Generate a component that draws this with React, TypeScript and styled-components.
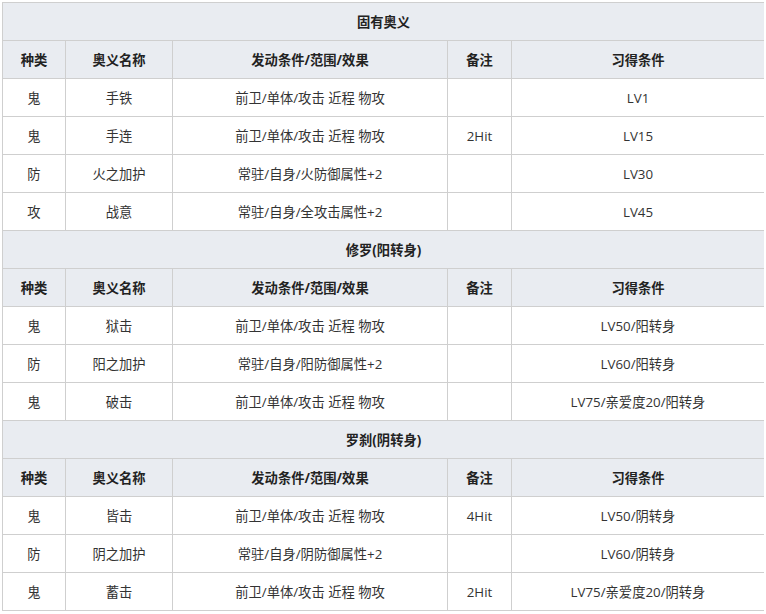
import React from "react";
import styled, { createGlobalStyle } from "styled-components";

type Row = [string, string, string, string, string];

interface Section {
  title: string;
  rows: Row[];
}

const sections: Section[] = [
  {
    title: "固有奥义",
    rows: [
      ["鬼", "手铁", "前卫/单体/攻击 近程 物攻", "", "LV1"],
      ["鬼", "手连", "前卫/单体/攻击 近程 物攻", "2Hit", "LV15"],
      ["防", "火之加护", "常驻/自身/火防御属性+2", "", "LV30"],
      ["攻", "战意", "常驻/自身/全攻击属性+2", "", "LV45"],
    ],
  },
  {
    title: "修罗(阳转身)",
    rows: [
      ["鬼", "狱击", "前卫/单体/攻击 近程 物攻", "", "LV50/阳转身"],
      ["防", "阳之加护", "常驻/自身/阳防御属性+2", "", "LV60/阳转身"],
      ["鬼", "破击", "前卫/单体/攻击 近程 物攻", "", "LV75/亲爱度20/阳转身"],
    ],
  },
  {
    title: "罗刹(阴转身)",
    rows: [
      ["鬼", "皆击", "前卫/单体/攻击 近程 物攻", "4Hit", "LV50/阴转身"],
      ["防", "阴之加护", "常驻/自身/阴防御属性+2", "", "LV60/阴转身"],
      ["鬼", "蓄击", "前卫/单体/攻击 近程 物攻", "2Hit", "LV75/亲爱度20/阴转身"],
    ],
  },
];

const headers = ["种类", "奥义名称", "发动条件/范围/效果", "备注", "习得条件"];
const colWidths = [63, 107, 275, 64, 253];

const GlobalStyle = createGlobalStyle`
  body {
    margin: 2px;
    background: #fff;
    font-family: "Open Sans", "Noto Sans CJK SC", sans-serif;
  }
`;

const App = () => {
  return (
    <>
      <GlobalStyle />
      <SkillTable>
        <colgroup>
          {colWidths.map((w, i) => (
            <col key={i} style={{ width: w }} />
          ))}
        </colgroup>
        <tbody>
          {sections.map((section) => (
            <React.Fragment key={section.title}>
              <tr>
                <HeadCell colSpan={5}>{section.title}</HeadCell>
              </tr>
              <tr>
                {headers.map((h) => (
                  <HeadCell key={h}>{h}</HeadCell>
                ))}
              </tr>
              {section.rows.map((row, i) => (
                <tr key={i}>
                  {row.map((cell, j) => (
                    <Cell key={j}>{cell}</Cell>
                  ))}
                </tr>
              ))}
            </React.Fragment>
          ))}
        </tbody>
      </SkillTable>
    </>
  );
};

const SkillTable = styled.table`
  width: 762px;
  table-layout: fixed;
  border-collapse: collapse;
  font-size: 13.3px;
  color: #333;
`;

const Cell = styled.td`
  height: 38px;
  padding: 0 6px;
  box-sizing: border-box;
  border: 1px solid #cfcfcf;
  text-align: center;
  vertical-align: middle;
  white-space: nowrap;
`;

const HeadCell = styled(Cell).attrs({ as: "th" })`
  background: #e9ecf1;
  font-weight: bold;
  color: #222;
`;

export default App;
